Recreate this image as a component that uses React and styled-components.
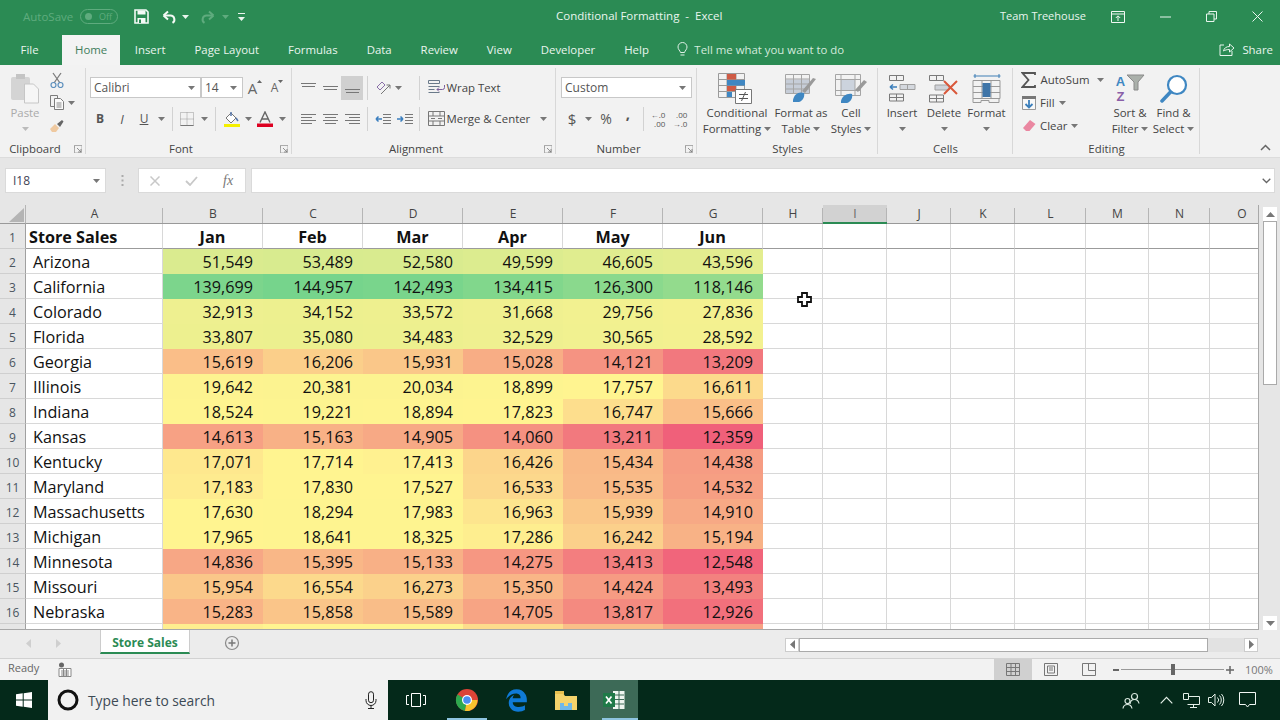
import React from 'react';
import styled, { createGlobalStyle } from 'styled-components';
import { FaEdgeLegacy } from 'react-icons/fa6';

const Global = createGlobalStyle`
  html, body { margin: 0; padding: 0; background: #e6e6e6; }
  body { font-family: "Open Sans", "Noto Sans", sans-serif; overflow: hidden; }
  * { box-sizing: border-box; }
`;

const GREEN = '#2b8b54';
const Page = styled.div`
  position: relative; width: 1280px; height: 720px; overflow: hidden;
  display: flex; flex-direction: column; background: #e6e6e6;
`;

/* ---------- generic drawing helpers ---------- */
const Svg = ({ w, h, children, ...r }) => (
  <svg width={w} height={h} viewBox={`0 0 ${w} ${h}`} fill="none" style={{ display: 'block', flex: 'none' }} {...r}>{children}</svg>
);
const Caret = ({ c = '#777' }) => <Svg w={7} h={4}><path d="M0 0h7L3.5 4z" fill={c} /></Svg>;

const Tool = styled.span`
  display: inline-flex; align-items: center; flex: none;
  justify-content: ${p => p.$start ? 'flex-start' : 'center'};
  padding-left: ${p => p.$pl || 0}px;
  padding-bottom: ${p => p.$pb || 0}px;
  width: ${p => p.$w}px; height: ${p => p.$h || 24}px;
  background: ${p => p.$active ? '#d0d0d0' : 'transparent'};
  color: ${p => p.$c || '#555'};
  font-size: ${p => p.$fs || 11.4}px; font-weight: ${p => p.$b ? 700 : 400};
  font-style: ${p => p.$i ? 'italic' : 'normal'};
  white-space: nowrap;
`;
const Sep = styled.span`
  flex: none; width: 1px; height: 24px; background: #d2d2d2;
  margin-left: ${p => p.$l}px; margin-right: ${p => p.$r}px;
`;

/* ---------- title bar ---------- */
const TitleBar = styled.header`
  height: 33px; background: ${GREEN}; display: flex; align-items: center; color: #e9f5ee; font-size: 11.5px; flex: none;
`;
const QuickAccess = styled.div`display: flex; align-items: center; width: 556px; flex: none; padding-left: 23px;`;
const AutoSave = styled.span`width: 57px; flex: none; color: #5fab7e; font-size: 11.5px; white-space: nowrap;`;
const Toggle = styled.span`
  width: 38px; height: 15px; border: 1px solid #5fab7e; border-radius: 8px; flex: none; color: #5fab7e;
  font-size: 9px; display: flex; align-items: center; justify-content: space-between; padding: 0 5px 0 4px;
  &::before { content: ""; width: 7px; height: 7px; border-radius: 50%; background: #5fab7e; }
`;
const WindowTitle = styled.div`width: 444px; flex: none; white-space: pre; padding-bottom: 2px;`;
const Account = styled.div`width: 100px; flex: none; white-space: nowrap; font-size: 11px; padding-bottom: 2px;`;

/* ---------- tabs ---------- */
const TabBar = styled.nav`
  height: 32px; background: ${GREEN}; display: flex; align-items: flex-end; flex: none; padding-left: 6px; color: #e9f5ee; font-size: 11.4px;
`;
const Tab = styled.span`
  height: 30px; display: flex; align-items: center; padding: 0 ${p => p.$on ? 13 : 14.5}px 2px; white-space: nowrap;
  background: ${p => p.$on ? '#f3f3f3' : 'transparent'}; color: ${p => p.$on ? '#3f7d5b' : 'inherit'};
  margin-right: ${p => p.$mr || 0}px;
`;
const TellMe = styled.span`display: flex; align-items: center; gap: 6px; height: 30px; padding: 0 0 2px 14px; white-space: nowrap; color: #d3eadc; flex: 1;`;
const Share = styled.span`display: flex; align-items: center; gap: 7px; height: 30px; padding: 0 7px 2px 0; white-space: nowrap;`;

/* ---------- ribbon ---------- */
const Ribbon = styled.section`
  height: 93px; background: #f2f2f2; display: flex; flex: none; border-bottom: 1px solid #dcdcdc; font-size: 11.4px; color: #444;
`;
const Group = styled.div`
  width: ${p => p.$w}px; flex: none; display: flex; flex-direction: column; padding-top: 3px; position: relative;
  &::after { content: ""; position: absolute; right: 0; top: 3px; bottom: 3px; width: 1px; background: #d8d8d8; }
`;
const GroupBody = styled.div`flex: 1; display: flex; min-height: 0; padding-left: ${p => p.$pl || 0}px;`;
const GroupLabel = styled.div`
  height: 18px; display: grid; grid-template-columns: 1fr auto 1fr; align-items: center; color: #444; font-size: 11.4px; padding-top: 1px;
  padding-right: ${p => p.$launch ? 16 : 0}px;
  & > svg { justify-self: end; margin-right: -12px; }
`;
const RowStack = styled.div`
  display: flex; flex-direction: column; padding-top: 4px; padding-left: ${p => p.$pl || 0}px;
`;
const ToolRow = styled.div`display: flex; align-items: center; height: 31px; white-space: nowrap;`;
const FieldBox = styled.div`
  width: ${p => p.$w}px; height: 21px; background: #fff; border: 1px solid #c8c8c8; flex: none;
  display: flex; align-items: center; justify-content: space-between; padding: 0 5px 0 3px; color: #555; font-size: 12px;
`;
const BigButton = styled.div`
  width: ${p => p.$w}px; flex: none; display: flex; flex-direction: column; align-items: center; padding-top: 4px; text-align: center;
  line-height: 16px; white-space: nowrap; color: ${p => p.$dim ? '#aaa' : '#444'}; font-size: 11.4px;
`;
const BigIcon = styled.div`height: 33px; display: flex; align-items: center; justify-content: center; flex: none;`;
const BigLine = styled.div`height: 16px; display: flex; align-items: center; justify-content: center; gap: 3px;`;
const SmallCol = styled.div`display: flex; flex-direction: column; width: ${p => p.$w}px; flex: none;`;
const SmallRow = styled.div`display: flex; align-items: center; height: 23px; white-space: nowrap; padding-left: ${p => p.$pl || 0}px; gap: ${p => p.$gap ?? 4}px;`;
const CollapseCell = styled.div`flex: 1; display: flex; align-items: flex-end; justify-content: flex-end; padding: 0 9px 6px 0;`;
const GrowGlyph = styled.span`
  display: inline-flex; align-items: flex-start; color: #666; font-size: ${p => p.$fs}px; line-height: 16px;
`;
const SortGlyph = styled.div`display: flex; align-items: flex-start; height: 30px; padding-top: 0;`;
const SortLetters = styled.div`
  display: flex; flex-direction: column; font-family: "Liberation Sans", sans-serif; font-size: 13px; font-weight: 700; line-height: 15px; width: 10px; flex: none;
`;
const SortLetter = styled.span`color: ${p => p.$c};`;
const DecimalStack = styled.span`
  display: inline-flex; flex-direction: column; align-items: flex-end; font-size: 8px; line-height: 9px; color: #555;
`;

/* ---------- formula bar ---------- */
const FormulaBar = styled.div`
  height: 47px; flex: none; display: flex; align-items: flex-start; padding: 10px 5px 0 5px; background: #e6e6e6;
`;
const NameBox = styled.div`
  width: 101px; height: 25px; background: #fff; border: 1px solid #dadada; display: flex; align-items: center; justify-content: space-between;
  padding: 0 5px 0 7px; font-size: 12px; color: #445; flex: none;
`;
const Dots = styled.div`width: 32px; flex: none; height: 25px; display: flex; align-items: center; justify-content: center;`;
const FxBox = styled.div`
  width: 108px; height: 25px; flex: none; background: #fff; border: 1px solid #dadada; display: flex; align-items: center; padding-left: 11px; gap: 25px;
`;
const Fx = styled.i`font-family: "Liberation Serif", serif; font-size: 14px; color: #777;`;
const FormulaInput = styled.div`
  flex: 1; margin-left: 5px; height: 25px; background: #fff; border: 1px solid #dadada; display: flex; align-items: center; justify-content: flex-end; padding-right: 3px;
`;

/* ---------- sheet ---------- */
const SheetArea = styled.div`height: 425px; display: flex; flex: none; position: relative;`;
const Sheet = styled.div`
  width: 1259px; height: 425px; overflow: hidden; flex: none; display: grid; background: #fff;
  grid-template-columns: 26px 137px repeat(6, 100px) 60px 64px 64px 64px 71px 63px 61px 64px;
  grid-template-rows: 19px; grid-auto-rows: 25px;
  border-right: 1px solid #a8a8a8; border-bottom: 1px solid #a8a8a8;
`;
const Corner = styled.div`
  background: #e6e6e6; border-bottom: 1px solid #999; border-right: 1px solid #b5b5b5; display: flex; align-items: flex-end; justify-content: flex-end; padding: 0 1px 1px 0;
`;
const ColHead = styled.div`
  background: ${p => p.$sel ? '#d2d2d2' : '#e6e6e6'};
  border-bottom: ${p => p.$sel ? `2px solid #2b8b54` : '1px solid #999'};
  display: flex; align-items: center; justify-content: center; font-size: 12px; color: ${p => p.$sel ? '#666' : '#444'}; position: relative;
  padding-bottom: 1px;
  &::after { content: ""; position: absolute; right: 0; top: 3px; bottom: 0; width: 1px; background: #b5b5b5; }
`;
const RowHead = styled.div`
  background: #e6e6e6; border-right: 1px solid #a0a0a0; border-bottom: 1px solid #cfcfcf; padding-top: 2px;
  display: flex; align-items: center; justify-content: center; font-size: 12px; color: #4a5560;
`;
const Cell = styled.div`
  font-size: 16.2px; color: #111; display: flex; align-items: center; white-space: nowrap; overflow: hidden;
  justify-content: ${p => p.$align || 'flex-start'};
  padding: 2px ${p => p.$pr ?? 9}px 0 ${p => p.$pl ?? 0}px;
  font-weight: ${p => p.$bold ? 700 : 400};
  background: ${p => p.$bg || '#fff'};
  border-bottom: 1px solid ${p => p.$bg ? p.$bg : (p.$head ? '#9b9b9b' : '#d8d8d8')};
  border-right: 1px solid ${p => p.$bg ? p.$bg : '#d8d8d8'};
`;
const VScroll = styled.div`flex: 1; display: flex; flex-direction: column; padding: 2px 3px 0 4px;`;
const ScrollBtn = styled.div`
  width: 14px; height: 14px; background: #fff; display: flex; align-items: center; justify-content: center; flex: none;
`;
const VThumb = styled.div`width: 14px; height: 164px; background: #fff; border: 1px solid #aaa; flex: none;`;
const VSpacer = styled.div`flex: 1;`;

/* ---------- sheet tabs ---------- */
const SheetTabs = styled.div`height: 28px; flex: none; display: flex; background: #ececec; align-items: flex-start;`;
const SheetNav = styled.div`width: 100px; height: 26px; display: flex; align-items: center; padding-left: 26px; gap: 25px; flex: none;`;
const SheetTab = styled.div`
  width: 90px; height: 24px; background: #fff; border-bottom: 2px solid #2b8b54; border-left: 1px solid #ccc; border-right: 1px solid #ccc;
  color: #2b8b54; font-weight: 700; font-size: 12px; display: flex; align-items: center; justify-content: center; flex: none; padding-top: 3px;
`;
const AddSheet = styled.div`width: 84px; height: 26px; display: flex; align-items: center; justify-content: center; flex: none;`;
const SplitGrip = styled.div`margin-left: 497px; width: 14px; height: 26px; flex: none;`;
const HScroll = styled.div`
  display: flex; align-items: center; height: 15px; margin-top: 7px; flex: none; width: 473px;
`;
const HBtn = styled.div`
  width: 14px; height: 14px; background: #fff; border: 1px solid #ccc; display: flex; align-items: center; justify-content: center; flex: none;
`;
const HThumb = styled.div`width: 409px; height: 14px; background: #fff; border: 1px solid #aaa; flex: none;`;
const HTrack = styled.div`width: 36px; height: 14px; background: #e2e2e2; flex: none;`;

/* ---------- status bar ---------- */
const StatusBar = styled.footer`
  height: 22px; flex: none; background: #f2f2f2; border-top: 1px solid #d2d2d2; display: flex; align-items: center; padding-left: 8px;
  font-size: 11px; color: #666;
`;
const ReadyText = styled.span`width: 50px; flex: none; padding-bottom: 4px;`;
const StatusSpacer = styled.span`width: 922px; flex: none;`;
const ViewBtn = styled.span`
  width: ${p => p.$w || 38}px; height: 21px; flex: none; display: flex; align-items: center; justify-content: center;
  background: ${p => p.$on ? '#d0d0d0' : 'transparent'};
`;
const ZoomOut = styled.span`width: 6px; height: 2px; background: #666; flex: none; margin-left: 5px;`;
const ZoomSlider = styled.div`
  width: 103px; height: 1px; background: #999; flex: none; margin: 0 2px; position: relative;
  &::after { content: ""; position: absolute; left: 50px; top: -5px; width: 4px; height: 11px; background: #666; }
`;
const ZoomPct = styled.span`margin-left: 11px; color: #777; white-space: nowrap;`;

/* ---------- taskbar ---------- */
const Taskbar = styled.div`height: 40px; flex: none; background: #04291a; display: flex; align-items: center;`;
const StartBtn = styled.div`width: 48px; height: 40px; display: flex; align-items: center; justify-content: center; flex: none; padding-right: 1px;`;
const SearchBox = styled.div`
  width: 340px; height: 40px; background: #f1f1f1; display: flex; align-items: center; flex: none; padding: 0 11px 0 9px;
`;
const SearchText = styled.span`font-size: 13.8px; color: #3d4a55; margin-left: 9px; flex: 1; white-space: nowrap;`;
const TaskApp = styled.div`
  width: ${p => p.$w || 48}px; height: 40px; flex: none; display: flex; align-items: center; justify-content: center; position: relative;
  background: ${p => p.$on ? '#3d6a57' : 'transparent'};
  &::after { content: ""; display: ${p => p.$run ? 'block' : 'none'}; position: absolute; left: ${p => p.$on ? 12 : 3}px; right: ${p => p.$on ? 0 : 3}px; bottom: 0; height: 2px; background: #8ec4e0; }
`;
const Tray = styled.div`margin-left: auto; display: flex; align-items: center; height: 40px; padding-right: 3px;`;
const TraySlot = styled.div`width: ${p => p.$w}px; display: flex; align-items: center; justify-content: center; flex: none;`;

const CursorPin = styled.div`position: absolute; left: 797px; top: 292px; pointer-events: none;`;

/* ---------- icons ---------- */
const I = {
  Save: () => <Svg w={15} h={15}><path d="M1 1h11l2 2v11H1z" stroke="#f4faf6" strokeWidth="1.6" fill="none" /><path d="M3.5 1.5h8v4h-8z" fill="#f4faf6" /><path d="M3.5 9h8v5h-8z" fill="#f4faf6" /><path d="M5 10.5h2v3.5H5z" fill="#2b8b54" /></Svg>,
  Undo: ({ c = '#f4faf6' }) => <Svg w={16} h={14}><path d="M1.5 5.5 6 1.5M1.5 5.5 6 9.5" stroke={c} strokeWidth="2" /><path d="M2 5.5h6.5a4 4 0 0 1 2 7.4" stroke={c} strokeWidth="2" /></Svg>,
  Redo: () => <Svg w={16} h={14}><path d="M14.5 5.5 10 1.5M14.5 5.5 10 9.5" stroke="#5fab7e" strokeWidth="2" /><path d="M14 5.5H7.5a4 4 0 0 0-2 7.4" stroke="#5fab7e" strokeWidth="2" /></Svg>,
  Qat: () => <Svg w={7} h={8}><path d="M0 .5h7" stroke="#e9f5ee" /><path d="M0 4h7L3.5 8z" fill="#e9f5ee" /></Svg>,
  RibbonOpt: () => <Svg w={14} h={12}><path d="M.5.5h13v11H.5zM.5 3h13" stroke="#f0f8f3" /><path d="M7 10V5M4.8 7 7 4.8 9.2 7" stroke="#f0f8f3" /></Svg>,
  Min: () => <Svg w={11} h={2}><path d="M0 1h11" stroke="#e9f5ee" /></Svg>,
  Restore: () => <Svg w={11} h={11}><path d="M.5 3h7.5v7.500H.5zM3 3V.5h7.500V8H8" stroke="#e9f5ee" /></Svg>,
  Close: () => <Svg w={11} h={11}><path d="M.5.5l10 10M10.500.5l-10 10" stroke="#e9f5ee" /></Svg>,
  Bulb: () => <Svg w={11} h={15}><path d="M3.500 10.500C3 8.500 1 7.500 1 5a4.500 4.500 0 0 1 9 0c0 2.500-2 3.500-2.500 5.500zM3.500 13h4" stroke="#dff0e6" /></Svg>,
  ShareIc: () => <Svg w={16} h={14}><path d="M5 3H1v10.500h12V9" stroke="#e9f5ee" /><path d="M4.500 9c.5-3 3-4.500 6-4.500V2l4.500 4-4.500 4V7.500c-2.500 0-4.500.5-6 1.500z" stroke="#e9f5ee" /></Svg>,
  Paste: () => <Svg w={30} h={31}><rect x="1" y="4" width="19" height="23" rx="2" fill="#d4d4d4" /><rect x="6" y="1" width="9" height="5" fill="#c4c4c4" /><path d="M14.500 11h9l5 5v14h-14z" fill="#f6f6f6" stroke="#c6c6c6" /></Svg>,
  Cut: () => <Svg w={14} h={16}><path d="M3 1l7 10M11 1L4 11" stroke="#7c7c7c" strokeWidth="1.3" /><circle cx="3.500" cy="13" r="2.500" stroke="#5c8fbd" strokeWidth="1.200" /><circle cx="10.500" cy="13" r="2.500" stroke="#5c8fbd" strokeWidth="1.200" /></Svg>,
  Copy: () => <Svg w={15} h={15}><path d="M.5.5h7v3M.5.5v11h4" stroke="#7c7c7c" /><path d="M4.500 3.500h6l3 3v8h-9z" fill="#fafafa" stroke="#7c7c7c" /><path d="M6.500 8h5M6.500 10h5M6.500 12h5" stroke="#888" /></Svg>,
  Painter: () => <Svg w={16} h={15}><path d="M1 11l5-5 4 4-3 4H3z" fill="#efc9a0" /><path d="M8 6l5-4 1.500 1.500L11 9z" fill="#666" /></Svg>,
  TriUpSm: () => <Svg w={5} h={3}><path d="M0 3l2.500-3L5 3z" fill="#666" /></Svg>,
  TriDownSm: () => <Svg w={5} h={3}><path d="M0 0h5L2.500 3z" fill="#666" /></Svg>,
  Borders: () => <Svg w={14} h={14}><path d="M.5.5h13v13H.5zM7 .5v13M.5 7h13" stroke="#999" strokeDasharray="1 1" /><path d="M.5 13.500h13" stroke="#777" /></Svg>,
  Fill: () => <Svg w={16} h={16}><path d="M2 7l5-5 5 5-5 5z" fill="#fff" stroke="#777" /><path d="M7 1v4M12 7l2 3" stroke="#5577aa" strokeWidth="1.500" /><path d="M0 13h16v3H0z" fill="#f5f000" /></Svg>,
  FontColor: () => <Svg w={16} h={16}><path d="M3 11.500L8 1l5 10.500M5 8h6" stroke="#666" strokeWidth="1.400" /><path d="M0 12.500h16V16H0z" fill="#dd0021" /></Svg>,
  Lines: ({ rows, stroke = '#777', w = 15 }) => <Svg w={w} h={12}>{rows.map(([x1, x2, y], i) => <path key={i} d={`M${x1} ${y}H${x2}`} stroke={stroke} />)}</Svg>,
  Orient: () => <Svg w={15} h={14}><path d="M1 6L6 1l3 3-5 5z" stroke="#8a6fa8" /><path d="M5 13L14 4M14 4h-3.500M14 4v3.500" stroke="#777" /></Svg>,
  Indent: ({ rev }) => <Svg w={16} h={12}><path d="M8 1.500h8M8 4.500h8M8 7.500h8M8 10.500h8M0 1.500h0" stroke="#777" />{rev ? <path d="M7 6H1M1 6l2.500-2.500M1 6l2.500 2.500" stroke="#3b7fbf" strokeWidth="1.500" /> : <path d="M0 6h6M6 6L3.500 3.500M6 6L3.500 8.500" stroke="#3b7fbf" strokeWidth="1.500" />}</Svg>,
  Wrap: () => <Svg w={18} h={16}><path d="M.5.500h11v3H.5zM.5 6.500h11M.5 9.500h6M.5 12.500h11" stroke="#6a7a8a" /><path d="M16.500 5v2.500a2 2 0 0 1-2 2H9M11 7.500 9 9.500l2 2" stroke="#7c5f9c" /></Svg>,
  Merge: () => <Svg w={17} h={15}><path d="M.5.500h16v14H.5zM.5 5h16M.5 10h16M5 1v4M12 1v4M5 10v4M12 10v4" stroke="#777" /><path d="M3 7.500h4M14 7.500h-4" stroke="#777" /></Svg>,
  Cond: () => <Svg w={38} h={32}><path d="M.5.500h26v24H.5zM9 .500v24M18 .500v24M.5 6.500h26M.5 12.500h26M.5 18.500h26" stroke="#9a9a9a" /><path d="M9 1h9v5.500H9z" fill="#cf5b45" /><path d="M9 7h18v5.500H9z" fill="#3f87c2" /><path d="M9 13h9v5H9z" fill="#cf5b45" /><path d="M9 19h5v5H9z" fill="#3f87c2" /><path d="M17.500 16.500h16v14h-16z" fill="#fff" stroke="#777" /><path d="M21 21.500h9M21 25.500h9M27.500 19l-4 9" stroke="#555" /></Svg>,
  FmtTable: () => <Svg w={32} h={31}><path d="M1 6.500h23V20H1z" fill="#c6cdd8" /><path d="M.5 1.500h24v19H.5zM.5 6h24M.5 11h24M.5 16h24M8.500 2v19M16.500 2v19" stroke="#a5a5a5" /><path d="M31 6L20 20l-3-2L28 5z" fill="#9a9a9a" /><path d="M8 27c1-6 6-9 11-7 1 3-1 8-5 9H8z" fill="#3f87c2" /></Svg>,
  CellSt: () => <Svg w={32} h={29}><path d="M6 6h14v10H6z" fill="#ccd3dd" /><path d="M.5.500h25v21H.5zM.5 5.500h25M.5 16.500h25M6 1v21M20 1v21" stroke="#a5a5a5" /><path d="M32 8l-9 10-3-2 9-10z" fill="#9a9a9a" /><path d="M6 27c1-5 6-8 11-7 1 3-1 8-5 9H6z" fill="#3f87c2" /></Svg>,
  Insert: () => <Svg w={28} h={27}><path d="M1.500.500h14v5h-14zM8.500.500v5M1.500 19h14v7h-14zM1.500 22.500h14M8.500 19v7" stroke="#7a7a7a" /><path d="M12 9.500h15v5H12zM19.500 9.500v5" stroke="#a0a0a0" fill="#d4d8de" /><path d="M9 12H2M2 12l3-2.500M2 12l3 2.500" stroke="#3c7fbb" strokeWidth="1.600" /></Svg>,
  Delete: () => <Svg w={30} h={28}><path d="M.5.500h14v5H.5zM7.500.500v5M.5 20h14v7H.5zM.5 23.500h14M7.500 20v7" stroke="#7a7a7a" /><path d="M6 10h14v5H6z" fill="#cfd2d8" stroke="#a0a0a0" /><path d="M15 6l13 13M28 6L15 19" stroke="#d9583b" strokeWidth="2" /></Svg>,
  Format: () => <Svg w={30} h={31}><path d="M1.500 3h27M3 1v4M27 1v4" stroke="#3f7fb5" /><path d="M1 7.500h27v18H1zM1 13.500h27M1 19.500h27M10 8v18M19 8v18" stroke="#999" /><path d="M10.500 10h8v14h-8z" fill="#3f75a8" /><path d="M1 25.500v4h8v-2h8v2h10v-4" stroke="#999" /></Svg>,
  Sigma: () => <Svg w={15} h={16}><path d="M14 3V1H1.500l6 7-6 7H14v-2" stroke="#555" strokeWidth="1.800" /></Svg>,
  FillDown: () => <Svg w={14} h={14}><path d="M.5.500h13v13H.5z" fill="#f8f8f8" stroke="#999" /><path d="M0 0h14v3H0z" fill="#777" /><path d="M7 4v7M3.500 8L7 11.500 10.500 8" stroke="#3c7fbb" strokeWidth="1.800" /></Svg>,
  Eraser: () => <Svg w={14} h={13}><path d="M1 9l7-8 5.500 4-6 7H4z" fill="#ea87a1" /></Svg>,
  Funnel: () => <Svg w={19} h={17}><path d="M1 1h17l-6 7v8H8V8z" fill="#aab0aa" stroke="#8a8a8a" /></Svg>,
  Find: () => <Svg w={28} h={30}><circle cx="17" cy="11" r="9" stroke="#3f87c2" strokeWidth="2.200" fill="#fff" /><path d="M10.500 18L2 27" stroke="#3f87c2" strokeWidth="3.500" strokeLinecap="round" /></Svg>,
  Launcher: () => <Svg w={8} h={8}><path d="M.5 3V.5H8M.5.500V8H8V.500" stroke="#999" strokeWidth=".8" /><path d="M3 3l4 4M4 7h3V4" stroke="#777" strokeWidth=".8" /></Svg>,
  Chev: () => <Svg w={11} h={7}><path d="M1 6l4.500-4.500L10 6" stroke="#666" strokeWidth="1.500" /></Svg>,
  X: () => <Svg w={10} h={10}><path d="M.5.500l9 9M9.500.500l-9 9" stroke="#c8c8c8" strokeWidth="1.500" /></Svg>,
  Check: () => <Svg w={13} h={10}><path d="M1 5l4 4 7-8" stroke="#c8c8c8" strokeWidth="1.800" /></Svg>,
  GripDots: () => <Svg w={3} h={11}><path d="M1.500 0v2M1.500 4.500v2M1.500 9v2" stroke="#aaa" strokeWidth="2" /></Svg>,
  ChevDown: () => <Svg w={9} h={6}><path d="M.7.700l3.800 3.800L8.300.700" stroke="#666" strokeWidth="1.300" /></Svg>,
  Corner: () => <Svg w={15} h={14}><path d="M15 0v14H0z" fill="#b4b4b4" /></Svg>,
  CaretUp: () => <Svg w={9} h={5}><path d="M0 5h9L4.500 0z" fill="#777" /></Svg>,
  CaretDown: () => <Svg w={9} h={5}><path d="M0 0h9L4.500 5z" fill="#777" /></Svg>,
  Tri: ({ dir, c = '#777' }) => <Svg w={5} h={9}><path d={dir === 'l' ? 'M5 0v9L0 4.500z' : 'M0 0v9l5-4.500z'} fill={c} /></Svg>,
  Plus: () => <Svg w={16} h={16}><circle cx="8" cy="8" r="6.500" stroke="#8a8a8a" strokeWidth="1.200" /><path d="M4.500 8h7M8 4.500v7" stroke="#777" strokeWidth="1.500" /></Svg>,
  Macro: () => <Svg w={14} h={15}><circle cx="3.500" cy="3" r="2.500" fill="#666" /><path d="M1 6.500h12v8H1z" fill="#fff" stroke="#888" /><path d="M3 9h8M3 11h8M3 13h8M5.500 7v7M8.500 7v7" stroke="#888" /></Svg>,
  ViewGrid: () => <Svg w={14} h={13}><path d="M.5.500h13v12H.5zM.5 4.500h13M.5 8.500h13M5 .500v12M9.500.500v12" stroke="#777" /></Svg>,
  ViewPage: () => <Svg w={14} h={13}><path d="M.5.500h13v12H.5z" stroke="#777" /><path d="M3.500 3h7v7h-7zM5 5h4M5 7h4" stroke="#777" /></Svg>,
  ViewBreak: () => <Svg w={14} h={13}><path d="M.5.500h13v12H.5zM6.500.500v7h7" stroke="#777" /></Svg>,
  ZoomIn: () => <Svg w={8} h={8}><path d="M0 4h8M4 0v8" stroke="#666" strokeWidth="1.500" /></Svg>,
  Win: () => <Svg w={16} h={16}><path d="M0 2.300l6.700-1v6.200H0zM7.700 1.200L16 0v7.500H7.700zM0 8.500h6.700v6.200l-6.700-1zM7.700 8.500H16V16l-8.300-1.200z" fill="#fff" /></Svg>,
  Cortana: () => <Svg w={22} h={22}><circle cx="11" cy="11" r="9" stroke="#111" strokeWidth="3" /></Svg>,
  Mic: () => <Svg w={12} h={18}><rect x="3.500" y=".7" width="5" height="11" rx="2.500" stroke="#222" /><path d="M1 8v1.500a5 5 0 0 0 10 0V8M6 14.500v2.500M3 17.500h6" stroke="#222" /></Svg>,
  TaskView: () => <Svg w={20} h={14}><path d="M5.500.500h9v13h-9zM3 2.500H.5v9H3M17 2.500h2.500v9H17" stroke="#fff" /></Svg>,
  Chrome: () => <Svg w={24} h={24}><circle cx="12" cy="12" r="11" fill="#db4437" /><path d="M12 12L2.500 6.500A11 11 0 0 0 10 23z" fill="#2da94f" /><path d="M12 12h10.500A11 11 0 0 1 10 23z" fill="#f7c32e" /><circle cx="12" cy="12" r="5" fill="#fff" /><circle cx="12" cy="12" r="3.800" fill="#4a8ef2" /></Svg>,
  Folder: () => <Svg w={22} h={20}><path d="M0 3h8l2 3h12v14H0z" fill="#f4d36b" /><path d="M0 1h9v3H0z" fill="#e8c04f" /><path d="M5 13h12v7H5z" fill="#6fb8e8" /><path d="M9 13h4v3H9z" fill="#f4d36b" /></Svg>,
  Excel: () => <Svg w={22} h={20}><path d="M10 1h11.500v18H10z" fill="#eef5f0" /><path d="M11 5h10M11 9.500h10M11 14h10M16 1v18" stroke="#3d6a57" /><path d="M0 3h12v14H0z" fill="#1f7a48" /><path d="M3 6.500l5.500 7M8.500 6.500L3 13.500" stroke="#fff" strokeWidth="1.700" /></Svg>,
  People: () => <Svg w={18} h={17}><circle cx="12.500" cy="4.500" r="3" stroke="#d8e6de" strokeWidth="1.200" /><path d="M8 12c.3-3 2-4.500 4.500-4.500 2.500 0 4 1.500 4.500 4" stroke="#d8e6de" strokeWidth="1.200" /><circle cx="5.500" cy="9" r="2.500" fill="#04291a" stroke="#d8e6de" strokeWidth="1.200" /><path d="M1 16.500c.3-2.500 2-4 4.500-4s4 1.500 4.500 4" stroke="#d8e6de" strokeWidth="1.200" /></Svg>,
  ChevUp: () => <Svg w={13} h={8}><path d="M.7 7.300l5.800-6 5.800 6" stroke="#e4efe8" strokeWidth="1.200" /></Svg>,
  Network: () => <Svg w={17} h={15}><path d="M4.500 3.500h12v8h-12M7 14.500h7M10.500 11.500v3" stroke="#e4efe8" /><path d="M.5.500h5v6h-5z" fill="#04291a" stroke="#e4efe8" /></Svg>,
  Speaker: () => <Svg w={17} h={14}><path d="M.5 4.500h3L7 1v12L3.500 9.500h-3z" stroke="#e4efe8" /><path d="M9.500 4.500a3.500 3.500 0 0 1 0 5M11.500 2.500a6.500 6.500 0 0 1 0 9M13.500 1a9 9 0 0 1 0 12" stroke="#e4efe8" /></Svg>,
  Notify: () => <Svg w={17} h={16}><path d="M.5.500h16v12h-6l-2 2.500-2-2.500h-6z" stroke="#f2f7f4" /></Svg>,
  Cursor: () => <Svg w={15} h={15}><path d="M5 1h5v4h4v5h-4v4H5v-4H1V5h4z" fill="#fff" stroke="#111" strokeWidth="1.800" /></Svg>,
};

/* ---------- data ---------- */
const columns = ['A', 'B', 'C', 'D', 'E', 'F', 'G', 'H', 'I', 'J', 'K', 'L', 'M', 'N', 'O'];
const header = ['Jan', 'Feb', 'Mar', 'Apr', 'May', 'Jun'];
const rows = [
  ['Arizona', 51549, 53489, 52580, 49599, 46605, 43596],
  ['California', 139699, 144957, 142493, 134415, 126300, 118146],
  ['Colorado', 32913, 34152, 33572, 31668, 29756, 27836],
  ['Florida', 33807, 35080, 34483, 32529, 30565, 28592],
  ['Georgia', 15619, 16206, 15931, 15028, 14121, 13209],
  ['Illinois', 19642, 20381, 20034, 18899, 17757, 16611],
  ['Indiana', 18524, 19221, 18894, 17823, 16747, 15666],
  ['Kansas', 14613, 15163, 14905, 14060, 13211, 12359],
  ['Kentucky', 17071, 17714, 17413, 16426, 15434, 14438],
  ['Maryland', 17183, 17830, 17527, 16533, 15535, 14532],
  ['Massachusetts', 17630, 18294, 17983, 16963, 15939, 14910],
  ['Michigan', 17965, 18641, 18325, 17286, 16242, 15194],
  ['Minnesota', 14836, 15395, 15133, 14275, 13413, 12548],
  ['Missouri', 15954, 16554, 16273, 15350, 14424, 13493],
  ['Nebraska', 15283, 15858, 15589, 14705, 13817, 12926],
];
const partial = [17300, 17950, 17650, 16650, 15650, 14650];

const LOW = [240, 96, 122], MID = [255, 244, 144], HIGH = [118, 212, 140];
const mix = (a, b, t) => a.map((v, i) => Math.round(v + (b[i] - v) * t));
const scale = v => {
  const min = 12359, mid = 17500, max = 144957;
  const c = v <= mid ? mix(LOW, MID, (v - min) / (mid - min)) : mix(MID, HIGH, (v - mid) / (max - mid));
  return `rgb(${c.join(',')})`;
};
const fmt = n => n.toLocaleString('en-US');
const emptyCols = 8;

const Blank = ({ k }) => Array.from({ length: emptyCols }, (_, i) => <Cell key={`${k}-${i}`} />);

const SheetGrid = () => (
  <Sheet>
    <Corner><I.Corner /></Corner>
    {columns.map(c => <ColHead key={c} $sel={c === 'I'}>{c}</ColHead>)}

    <RowHead>1</RowHead>
    <Cell $bold $head $pl={3} $pr={0}>Store Sales</Cell>
    {header.map(h => <Cell key={h} $bold $head $align="center" $pr={0}>{h}</Cell>)}
    {Array.from({ length: emptyCols }, (_, i) => <Cell key={i} $head />)}

    {rows.map((r, i) => (
      <React.Fragment key={r[0]}>
        <RowHead>{i + 2}</RowHead>
        <Cell $pl={7} $pr={0}>{r[0]}</Cell>
        {r.slice(1).map((v, j) => <Cell key={j} $bg={scale(v)} $align="flex-end">{fmt(v)}</Cell>)}
        <Blank k={r[0]} />
      </React.Fragment>
    ))}
    <RowHead />
    <Cell />
    {partial.map((v, j) => <Cell key={j} $bg={scale(v)} />)}
    <Blank k="last" />
  </Sheet>
);

export default function App() {
  return (
    <Page>
      <Global />
      <TitleBar>
        <QuickAccess>
          <AutoSave>AutoSave</AutoSave>
          <Toggle>Off</Toggle>
          <Tool $w={46}><I.Save /></Tool>
          <Tool $w={12}><I.Undo /></Tool>
          <Tool $w={18}><Caret c="#e9f5ee" /></Tool>
          <Tool $w={26}><I.Redo /></Tool>
          <Tool $w={10}><Caret c="#5fab7e" /></Tool>
          <Tool $w={22}><I.Qat /></Tool>
        </QuickAccess>
        <WindowTitle>Conditional Formatting  -  Excel</WindowTitle>
        <Account>Team Treehouse</Account>
        <Tool $w={36}><I.RibbonOpt /></Tool>
        <Tool $w={58}><I.Min /></Tool>
        <Tool $w={34}><I.Restore /></Tool>
        <Tool $w={58}><I.Close /></Tool>
      </TitleBar>

      <TabBar>
        <Tab $mr={9}>File</Tab>
        <Tab $on>Home</Tab>
        <Tab>Insert</Tab>
        <Tab>Page Layout</Tab>
        <Tab>Formulas</Tab>
        <Tab>Data</Tab>
        <Tab>Review</Tab>
        <Tab>View</Tab>
        <Tab>Developer</Tab>
        <Tab>Help</Tab>
        <TellMe><I.Bulb />Tell me what you want to do</TellMe>
        <Share><I.ShareIc />Share</Share>
      </TabBar>

      <Ribbon>
        <Group $w={86}>
          <GroupBody>
            <BigButton $w={50} $dim>
              <BigIcon><I.Paste /></BigIcon>
              <BigLine>Paste</BigLine>
              <BigLine><Caret c="#bbb" /></BigLine>
            </BigButton>
            <SmallCol $w={30}>
              <SmallRow><Tool $w={14}><I.Cut /></Tool></SmallRow>
              <SmallRow $gap={4}><Tool $w={14}><I.Copy /></Tool><Caret /></SmallRow>
              <SmallRow><Tool $w={14}><I.Painter /></Tool></SmallRow>
            </SmallCol>
          </GroupBody>
          <GroupLabel $launch><span /><span>Clipboard</span><I.Launcher /></GroupLabel>
        </Group>

        <Group $w={206}>
          <GroupBody>
            <RowStack $pl={4}>
              <ToolRow>
                <FieldBox $w={111}>Calibri<Caret /></FieldBox>
                <FieldBox $w={42}>14<Caret /></FieldBox>
                <Tool $w={24}><GrowGlyph $fs={15}>A<I.TriUpSm /></GrowGlyph></Tool>
                <Tool $w={20}><GrowGlyph $fs={12}>A<I.TriDownSm /></GrowGlyph></Tool>
              </ToolRow>
              <ToolRow>
                <Tool $w={20} $b $fs={12}>B</Tool>
                <Tool $w={24} $i $fs={13}>I</Tool>
                <Tool $w={20} $fs={12}><u>U</u></Tool>
                <Tool $w={14}><Caret /></Tool>
                <Sep $l={3.5} $r={3.5} />
                <Tool $w={22}><I.Borders /></Tool>
                <Tool $w={12}><Caret /></Tool>
                <Sep $l={4.5} $r={4.5} />
                <Tool $w={24}><I.Fill /></Tool>
                <Tool $w={8}><Caret /></Tool>
                <Tool $w={26}><I.FontColor /></Tool>
                <Tool $w={8}><Caret /></Tool>
              </ToolRow>
            </RowStack>
          </GroupBody>
          <GroupLabel $launch><span /><span>Font</span><I.Launcher /></GroupLabel>
        </Group>

        <Group $w={264}>
          <GroupBody>
            <RowStack $pl={5}>
              <ToolRow>
                <Tool $w={22}><I.Lines rows={[[0, 15, 1.5], [1, 14, 4.5]]} /></Tool>
                <Tool $w={22}><I.Lines rows={[[0, 15, 4.5], [1, 14, 7.5]]} /></Tool>
                <Tool $w={22} $active><I.Lines rows={[[0, 15, 7.5], [1, 14, 10.5]]} /></Tool>
                <Sep $l={3.5} $r={3.5} />
                <Tool $w={24}><I.Orient /></Tool>
                <Tool $w={6}><Caret /></Tool>
                <Sep $l={17.5} $r={8} />
                <Tool $w={18}><I.Wrap /></Tool>
                <Tool $w={58} $start $pl={1} $c="#444">Wrap Text</Tool>
              </ToolRow>
              <ToolRow>
                <Tool $w={22}><I.Lines rows={[[0, 15, 1.5], [0, 11, 4.5], [0, 15, 7.5], [0, 11, 10.5]]} /></Tool>
                <Tool $w={22}><I.Lines rows={[[0, 15, 1.5], [2, 13, 4.5], [0, 15, 7.5], [2, 13, 10.5]]} /></Tool>
                <Tool $w={22}><I.Lines rows={[[0, 15, 1.5], [4, 15, 4.5], [0, 15, 7.5], [4, 15, 10.5]]} /></Tool>
                <Sep $l={3.5} $r={3.5} />
                <Tool $w={24}><I.Indent rev /></Tool>
                <Tool $w={20}><I.Indent /></Tool>
                <Sep $l={3.5} $r={8} />
                <Tool $w={18}><I.Merge /></Tool>
                <Tool $w={88} $start $pl={1} $c="#444">Merge &amp; Center</Tool>
                <Tool $w={20}><Caret /></Tool>
              </ToolRow>
            </RowStack>
          </GroupBody>
          <GroupLabel $launch><span /><span>Alignment</span><I.Launcher /></GroupLabel>
        </Group>

        <Group $w={141}>
          <GroupBody>
            <RowStack $pl={5}>
              <ToolRow><FieldBox $w={131}>Custom<Caret /></FieldBox></ToolRow>
              <ToolRow>
                <Tool $w={22} $fs={15}>$</Tool>
                <Tool $w={10}><Caret /></Tool>
                <Tool $w={26} $fs={14}>%</Tool>
                <Tool $w={18} $fs={15} $b $pb={12}>,</Tool>
                <Sep $l={5.5} $r={3.5} />
                <Tool $w={22}><DecimalStack><span>←.0</span><span>.00</span></DecimalStack></Tool>
                <Tool $w={22}><DecimalStack><span>.00</span><span>→.0</span></DecimalStack></Tool>
              </ToolRow>
            </RowStack>
          </GroupBody>
          <GroupLabel $launch><span /><span>Number</span><I.Launcher /></GroupLabel>
        </Group>

        <Group $w={181}>
          <GroupBody>
            <BigButton $w={80}>
              <BigIcon><I.Cond /></BigIcon>
              <BigLine>Conditional</BigLine>
              <BigLine>Formatting <Caret /></BigLine>
            </BigButton>
            <BigButton $w={48}>
              <BigIcon><I.FmtTable /></BigIcon>
              <BigLine>Format as</BigLine>
              <BigLine>Table <Caret /></BigLine>
            </BigButton>
            <BigButton $w={52}>
              <BigIcon><I.CellSt /></BigIcon>
              <BigLine>Cell</BigLine>
              <BigLine>Styles <Caret /></BigLine>
            </BigButton>
          </GroupBody>
          <GroupLabel><span /><span>Styles</span><span /></GroupLabel>
        </Group>

        <Group $w={135}>
          <GroupBody $pl={3}>
            <BigButton $w={42}>
              <BigIcon><I.Insert /></BigIcon>
              <BigLine>Insert</BigLine>
              <BigLine><Caret /></BigLine>
            </BigButton>
            <BigButton $w={42}>
              <BigIcon><I.Delete /></BigIcon>
              <BigLine>Delete</BigLine>
              <BigLine><Caret /></BigLine>
            </BigButton>
            <BigButton $w={43}>
              <BigIcon><I.Format /></BigIcon>
              <BigLine>Format</BigLine>
              <BigLine><Caret /></BigLine>
            </BigButton>
          </GroupBody>
          <GroupLabel><span /><span>Cells</span><span /></GroupLabel>
        </Group>

        <Group $w={187}>
          <GroupBody>
            <SmallCol $w={95}>
              <SmallRow $pl={8} $gap={3}><I.Sigma /><Tool $w={52} $c="#444">AutoSum</Tool><Tool $w={12}><Caret /></Tool></SmallRow>
              <SmallRow $pl={9} $gap={4}><I.FillDown />Fill<Caret /></SmallRow>
              <SmallRow $pl={9} $gap={4}><I.Eraser />Clear<Caret /></SmallRow>
            </SmallCol>
            <BigButton $w={44}>
              <BigIcon>
                <SortGlyph>
                  <SortLetters><SortLetter $c="#3f87c2">A</SortLetter><SortLetter $c="#8a5fa8">Z</SortLetter></SortLetters>
                  <I.Funnel />
                </SortGlyph>
              </BigIcon>
              <BigLine>Sort &amp;</BigLine>
              <BigLine>Filter <Caret /></BigLine>
            </BigButton>
            <BigButton $w={43}>
              <BigIcon><I.Find /></BigIcon>
              <BigLine>Find &amp;</BigLine>
              <BigLine>Select <Caret /></BigLine>
            </BigButton>
          </GroupBody>
          <GroupLabel><span /><span>Editing</span><span /></GroupLabel>
        </Group>

        <CollapseCell><I.Chev /></CollapseCell>
      </Ribbon>

      <FormulaBar>
        <NameBox>I18<Caret /></NameBox>
        <Dots><I.GripDots /></Dots>
        <FxBox><I.X /><I.Check /><Fx>fx</Fx></FxBox>
        <FormulaInput><I.ChevDown /></FormulaInput>
      </FormulaBar>

      <SheetArea>
        <SheetGrid />
        <VScroll>
          <ScrollBtn><I.CaretUp /></ScrollBtn>
          <VThumb />
          <VSpacer />
          <ScrollBtn><I.CaretDown /></ScrollBtn>
        </VScroll>
      </SheetArea>

      <SheetTabs>
        <SheetNav><I.Tri dir="l" c="#cfcfcf" /><I.Tri dir="r" c="#cfcfcf" /></SheetNav>
        <SheetTab>Store Sales</SheetTab>
        <AddSheet><I.Plus /></AddSheet>
        <SplitGrip />
        <HScroll>
          <HBtn><I.Tri dir="l" /></HBtn>
          <HThumb />
          <HTrack />
          <HBtn><I.Tri dir="r" /></HBtn>
        </HScroll>
      </SheetTabs>

      <StatusBar>
        <ReadyText>Ready</ReadyText>
        <I.Macro />
        <StatusSpacer />
        <ViewBtn $on><I.ViewGrid /></ViewBtn>
        <ViewBtn><I.ViewPage /></ViewBtn>
        <ViewBtn><I.ViewBreak /></ViewBtn>
        <ZoomOut />
        <ZoomSlider />
        <I.ZoomIn />
        <ZoomPct>100%</ZoomPct>
      </StatusBar>

      <Taskbar>
        <StartBtn><I.Win /></StartBtn>
        <SearchBox>
          <I.Cortana />
          <SearchText>Type here to search</SearchText>
          <Tool $w={12}><I.Mic /></Tool>
        </SearchBox>
        <TaskApp $w={56}><I.TaskView /></TaskApp>
        <TaskApp $w={46} $run><I.Chrome /></TaskApp>
        <TaskApp $w={52}><FaEdgeLegacy size={23} color="#0f7ad6" /></TaskApp>
        <TaskApp $w={48}><I.Folder /></TaskApp>
        <TaskApp $w={48} $on $run><I.Excel /></TaskApp>
        <Tray>
          <TraySlot $w={46}><I.People /></TraySlot>
          <TraySlot $w={24}><I.ChevUp /></TraySlot>
          <TraySlot $w={26}><I.Network /></TraySlot>
          <TraySlot $w={24}><I.Speaker /></TraySlot>
          <TraySlot $w={38}><I.Notify /></TraySlot>
          <TraySlot $w={11} />
        </Tray>
      </Taskbar>

      <CursorPin><I.Cursor /></CursorPin>
    </Page>
  );
}
